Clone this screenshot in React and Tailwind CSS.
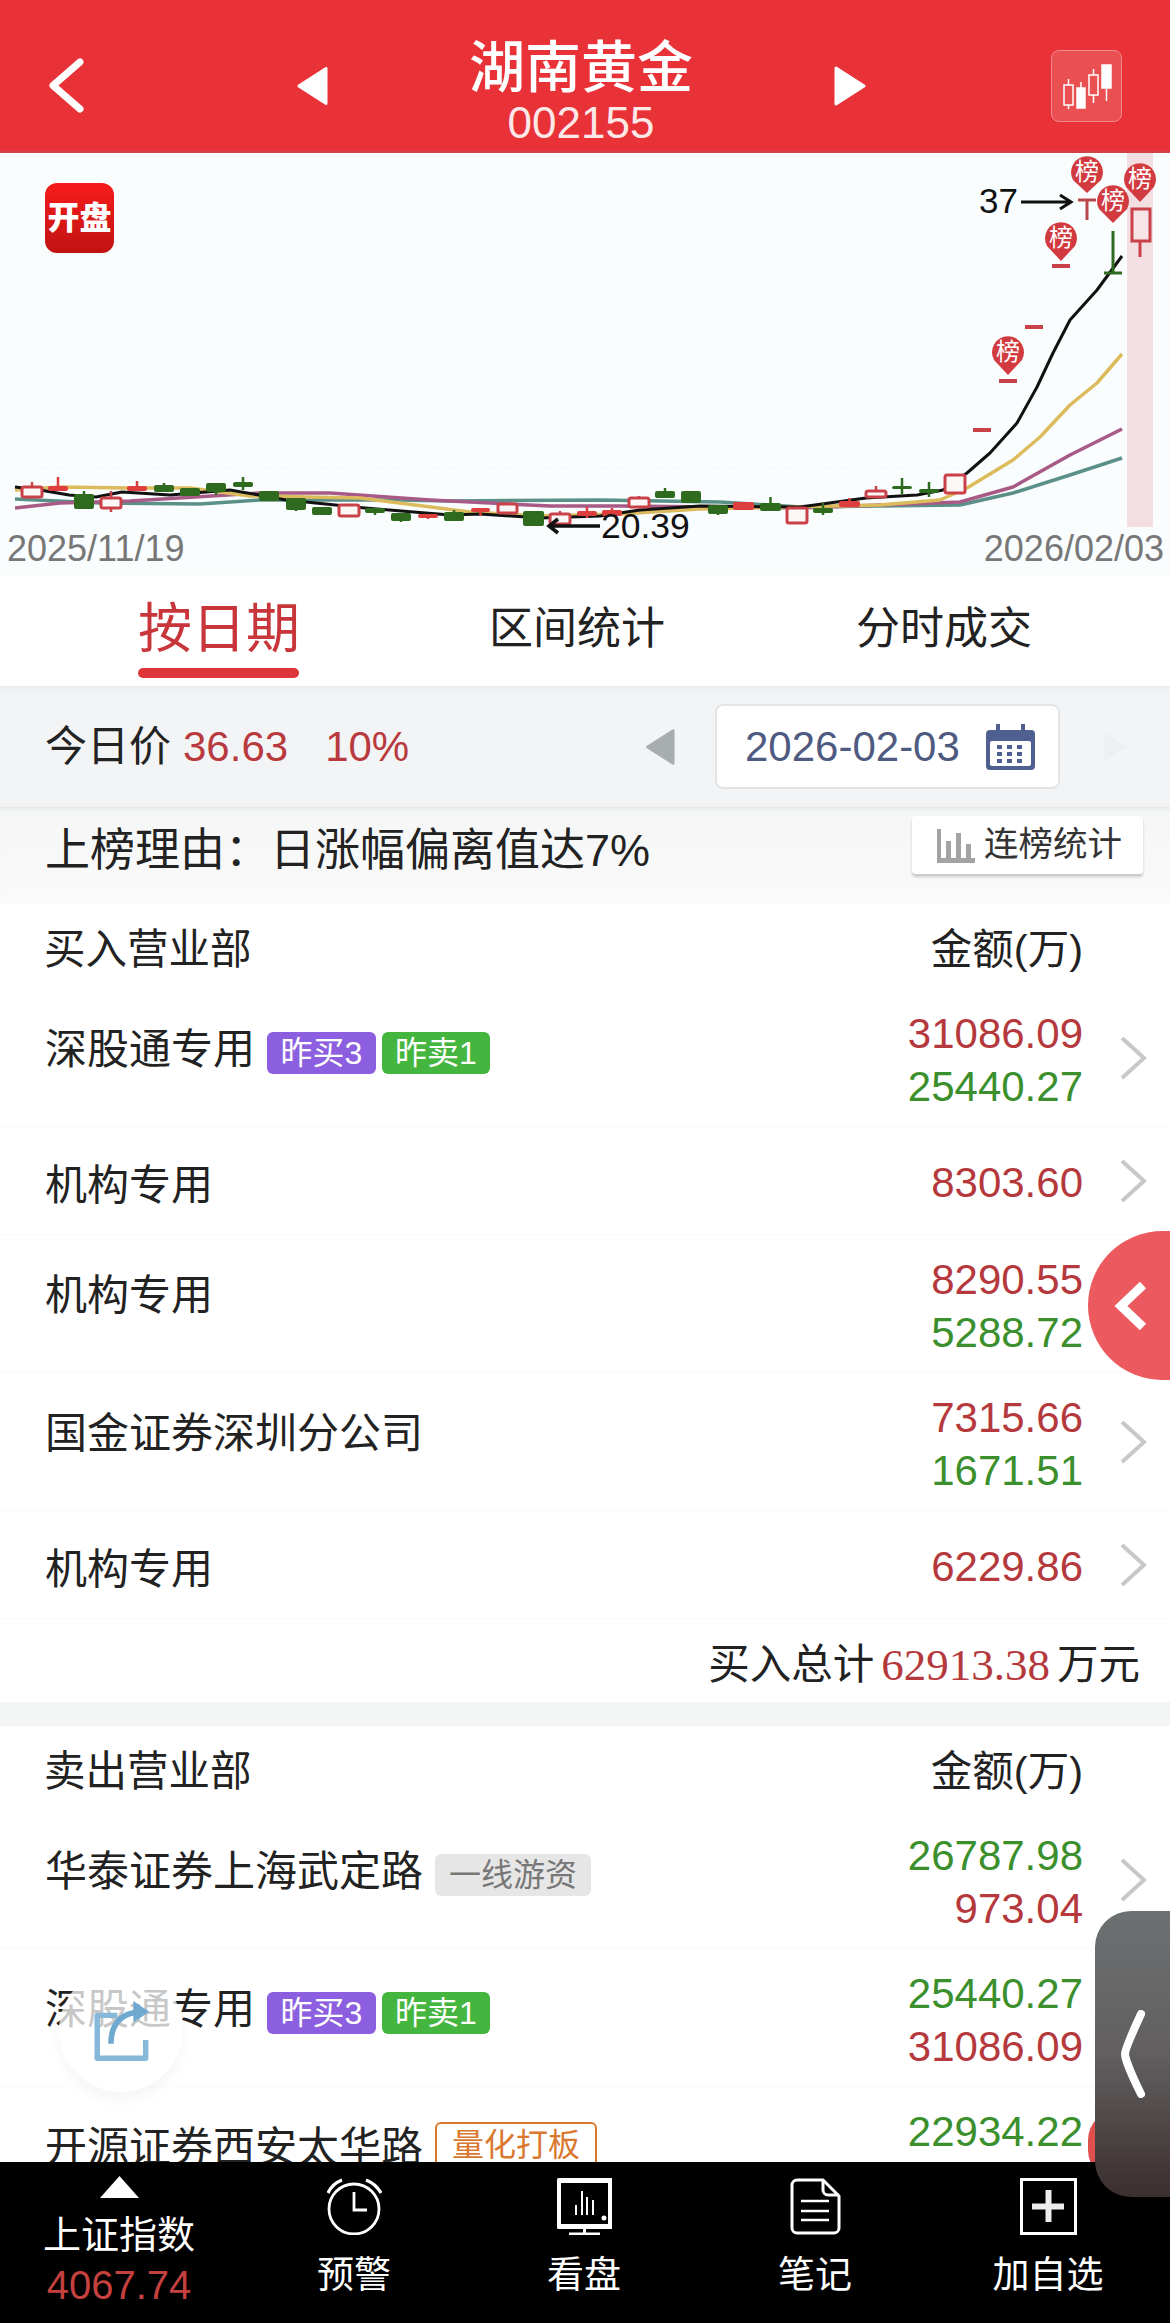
const candles = [
	// x, y, w, h, kind, wick top, wick bottom
	[22, 487, 20, 10, 'hollow', 482, 497],
	[48, 486, 20, 5, 'red', 477, 491],
	[74, 494, 20, 15, 'green', 491, 509],
	[101, 498, 20, 10, 'hollow', 491, 512],
	[127, 486, 20, 5, 'red', 481, 491],
	[154, 485, 20, 7, 'green', 483, 492],
	[180, 488, 20, 8, 'green', 488, 496],
	[206, 483, 20, 9, 'green', 483, 495],
	[233, 482, 20, 5, 'green', 477, 490],
	[259, 491, 20, 10, 'green', 491, 501],
	[286, 498, 20, 12, 'green', 498, 511],
	[312, 507, 20, 8, 'green', 507, 515],
	[339, 505, 20, 11, 'hollow', 505, 516],
	[365, 508, 20, 5, 'green', 508, 515],
	[391, 513, 20, 8, 'green', 513, 522],
	[418, 514, 20, 4, 'red', 514, 519],
	[444, 512, 20, 9, 'green', 510, 521],
	[471, 508, 19, 4, 'red', 508, 516],
	[498, 504, 19, 9, 'hollow', 504, 513],
	[523, 511, 21, 15, 'green', 511, 526],
	[550, 514, 20, 10, 'hollow', 511, 524],
	[577, 511, 20, 5, 'red', 507, 518],
	[602, 510, 20, 6, 'red', 508, 516],
	[629, 498, 20, 9, 'hollow', 496, 507],
	[655, 491, 20, 7, 'green', 488, 498],
	[681, 491, 20, 12, 'green', 491, 503],
	[708, 505, 20, 9, 'green', 505, 515],
	[733, 502, 21, 8, 'red', 502, 510],
	[760, 503, 21, 8, 'green', 497, 511],
	[787, 508, 20, 15, 'hollow', 508, 524],
	[813, 508, 20, 5, 'green', 503, 515],
	[839, 501, 21, 6, 'red', 498, 507],
	[866, 491, 20, 6, 'hollow', 486, 497],
	[892, 486, 20, 3, 'green', 478, 494],
	[919, 489, 20, 4, 'green', 482, 497],
	[945, 475, 20, 18, 'hollow', 475, 493],
]

const dashes = [
	[973, 430],
	[999, 381],
	[1025, 327],
	[1052, 266],
]

const pins = [
	[1087, 172, 193],
	[1113, 201, 223],
	[1140, 179, 202],
	[1061, 238, 261],
	[1008, 352, 375],
]

const blackLine = '15,487 40,490 69,495 96,497 122,492 170,495 230,490 259,495 286,500 365,508 450,515 480,514 540,518 600,516 640,510 700,506 800,507 866,498 917,495 943,490 967,473 990,453 1017,423 1037,387 1053,353 1070,320 1097,290 1122,256'
const yellowLine = '15,490 60,487 130,488 190,488 250,496 360,498 470,512 540,516 620,514 700,509 880,505 940,500 967,488 1013,460 1040,437 1070,405 1097,383 1122,354'
const purpleLine = '15,508 60,503 130,501 260,493 330,493 430,500 550,506 620,506 800,508 960,502 1013,487 1070,455 1122,429'
const tealLine = '15,499 100,503 200,504 260,500 400,500 450,501 600,500 720,502 800,507 960,505 1013,493 1070,475 1122,458'

const KLine = () => (
	<svg className="absolute inset-0 h-full w-full" viewBox="0 153 1170 422">
		<rect x="1127" y="153" width="26" height="374" fill="#f3dfe2" />
		{[258, 363, 468].map((y) => (
			<line key={y} x1="15" x2="1122" y1={y} y2={y} stroke="#f2f5f5" strokeDasharray="5 9" />
		))}
		<polyline points={tealLine} fill="none" stroke="#5b9088" strokeWidth="3.5" strokeLinejoin="round" />
		<polyline points={purpleLine} fill="none" stroke="#a85a86" strokeWidth="3.5" strokeLinejoin="round" />
		<polyline points={yellowLine} fill="none" stroke="#dcbb5c" strokeWidth="3.5" strokeLinejoin="round" />
		<polyline points={blackLine} fill="none" stroke="#111111" strokeWidth="3" strokeLinejoin="round" />
		{candles.map(([x, y, w, h, kind, top, bottom]) => {
			const color = kind === 'green' ? '#2f6b1e' : kind === 'red' ? '#dc3f3d' : '#c9424a'
			return (
				<g key={x}>
					<line x1={x + w / 2} x2={x + w / 2} y1={top} y2={bottom} stroke={color} strokeWidth="2.5" />
					<rect
						x={x}
						y={y}
						width={w}
						height={h}
						rx="2"
						fill={kind === 'hollow' ? '#fbf7f7' : color}
						stroke={kind === 'hollow' ? color : 'none'}
						strokeWidth={kind === 'hollow' ? 3 : 0}
					/>
				</g>
			)
		})}
		{dashes.map(([x, y]) => (
			<rect key={x} x={x} y={y - 2} width="18" height="4" fill="#c9424a" />
		))}
		<path d="M1078 200H1096M1087 200V220" stroke="#b9474c" strokeWidth="3" fill="none" />
		<path d="M1104 273H1122M1113 231V273" stroke="#2f6b1e" strokeWidth="3" fill="none" />
		<path d="M1140 241V257" stroke="#c9424a" strokeWidth="3" fill="none" />
		<rect x="1132" y="209" width="18" height="32" fill="#f6e4e6" stroke="#c9424a" strokeWidth="3" />
		{pins.map(([cx, cy, tip]) => (
			<g key={cx}>
				<path
					d={`M${cx} ${tip} L${cx - 14} ${cy + 8} A16 16 0 1 1 ${cx + 14} ${cy + 8} Z`}
					fill="#d13b40"
				/>
				<text
					x={cx}
					y={cy + 8}
					textAnchor="middle"
					fontSize="24"
					fill="#ffffff"
					fontFamily="Noto Sans CJK SC, sans-serif"
				>
					榜
				</text>
			</g>
		))}
		<text x="979" y="213" fontSize="35" fill="#111111" fontFamily="Liberation Sans, sans-serif">37</text>
		<path d="M1021 202H1068M1060 195L1071 202L1060 209" stroke="#111111" strokeWidth="3" fill="none" />
		<path d="M600 526H550M558 519L549 526L558 533" stroke="#111111" strokeWidth="3.5" fill="none" />
		<text x="601" y="538" fontSize="35.5" fill="#111111" fontFamily="Liberation Sans, sans-serif">20.39</text>
	</svg>
)

const CandleIcon = () => (
	<svg width="71" height="72" viewBox="0 0 71 72" fill="none" stroke="#ffffff" strokeWidth="1.5">
		<rect x="12" y="34" width="9" height="20" />
		<path d="M16.5 28V34M16.5 54V58" />
		<rect x="25" y="37" width="8" height="20" fill="#ffffff" />
		<path d="M29 31V37" />
		<rect x="37" y="24" width="9" height="20" />
		<path d="M41.5 18V24M41.5 44V52" />
		<rect x="50" y="14" width="9" height="23" fill="#ffffff" />
		<path d="M54.5 37V50" />
	</svg>
)

const Triangle = ({ dir, className }) => (
	<svg className={className} viewBox="0 0 34 40">
		<path
			d={dir === 'left' ? 'M32 2 L4 20 L32 38 Z' : 'M2 2 L30 20 L2 38 Z'}
			fill="currentColor"
			stroke="currentColor"
			strokeWidth="3"
			strokeLinejoin="round"
		/>
	</svg>
)

const Header = () => (
	<div className="flex h-[153px] items-center border-b-2 border-[#cf4448] bg-[#e83238] pl-[48px] pt-[20px] text-white">
		<svg width="36" height="55" viewBox="0 0 36 55" fill="none">
			<path d="M32 4 L5 27.5 L32 51" stroke="#ffffff" strokeWidth="7" strokeLinecap="round" strokeLinejoin="round" />
		</svg>
		<Triangle dir="left" className="ml-[211px] h-[40px] w-[33px] text-white" />
		<div className="mt-[12px] flex w-[506px] flex-col items-center">
			<div className="text-[56px] leading-[62px] font-medium">湖南黄金</div>
			<div className="text-[44px] leading-[48px] text-[#fde8e8]">002155</div>
		</div>
		<Triangle dir="right" className="h-[40px] w-[34px] text-white" />
		<div className="ml-[183px] h-[72px] w-[71px] rounded-[8px] border border-[#f08a8c] bg-[#ea4f52]">
			<CandleIcon />
		</div>
	</div>
)

const Chart = () => (
	<div className="relative h-[422px] bg-[#fafdfe]">
		<KLine />
		<div className="absolute left-[45px] top-[30px] flex h-[70px] w-[69px] items-center justify-center rounded-[12px] bg-gradient-to-b from-[#f81c1c] to-[#c01212] text-[32px] leading-none font-black text-white">
			开盘
		</div>
		<div className="absolute left-[7px] top-[376px] text-[36px] leading-[40px] text-[#777777]">2025/11/19</div>
		<div className="absolute right-[6px] top-[376px] text-[36px] leading-[40px] text-[#777777]">2026/02/03</div>
	</div>
)

const Tabs = () => (
	<div className="flex h-[111px] items-start bg-white pl-[138px] text-[#222222]">
		<div className="flex flex-col pt-[23px]">
			<div className="text-[54px] leading-[62px] text-[#c8353a]">按日期</div>
			<div className="mt-[8px] h-[10px] w-[161px] rounded-full bg-[#dd353a]" />
		</div>
		<div className="ml-[189px] pt-[23px] text-[44px] leading-[62px]">区间统计</div>
		<div className="ml-[191px] pt-[23px] text-[44px] leading-[62px]">分时成交</div>
	</div>
)

const CalendarIcon = () => (
	<svg width="49" height="46" viewBox="0 0 49 46">
		<rect x="0" y="6" width="49" height="40" rx="4" fill="#4f5f8f" />
		<rect x="4" y="17" width="41" height="25" rx="2" fill="#ffffff" />
		<path d="M12 0V11M37 0V11" stroke="#4f5f8f" strokeWidth="4" />
		{[11, 21, 31].map((x) =>
			[21, 28, 35].map((y) => <rect key={`${x}-${y}`} x={x} y={y} width="5" height="4" fill="#4f5f8f" />),
		)}
	</svg>
)

const DateBar = () => (
	<div className="flex h-[121px] items-center bg-[#f3f4f5] pl-[45px] pr-[43px] text-[42px] shadow-[inset_0_8px_8px_-8px_#e4e4e4]">
		<div className="flex flex-1 items-center text-[#222222]">
			<span>今日价</span>
			<span className="ml-[12px] text-[#b93a3e]">36.63</span>
			<span className="ml-[37px] text-[#b93a3e]">10%</span>
		</div>
		<Triangle dir="left" className="h-[40px] w-[31px] text-[#a8aeae]" />
		<div className="ml-[40px] flex h-[85px] w-[345px] items-center rounded-[8px] border-2 border-[#e2e4e6] bg-white pl-[28px]">
			<span className="text-[42px] text-[#4f5a80]">2026-02-03</span>
			<div className="ml-[26px]">
				<CalendarIcon />
			</div>
		</div>
		<Triangle dir="right" className="ml-[44px] h-[40px] w-[23px] text-[#eeeff0]" />
	</div>
)

const BarsIcon = () => (
	<svg width="38" height="36" viewBox="0 0 38 36" fill="#a3a3a3">
		<rect x="0" y="2" width="4" height="34" />
		<rect x="0" y="31" width="38" height="5" />
		<rect x="9" y="14" width="5" height="17" />
		<rect x="19" y="6" width="5" height="25" />
		<rect x="29" y="17" width="5" height="14" />
	</svg>
)

const ReasonBar = () => (
	<div className="flex h-[97px] justify-between bg-gradient-to-b from-[#f5f6f6] to-[#fafafa] pl-[45px] pr-[27px] pt-[9px] shadow-[inset_0_4px_4px_-3px_#dddddd]">
		<div className="pt-[4px] text-[45px] leading-[62px] text-[#222222]">上榜理由：日涨幅偏离值达7%</div>
		<div className="flex h-[58px] w-[231px] items-center gap-[9px] rounded-[4px] bg-white pl-[25px] text-[34.5px] text-[#333333] shadow-[0_3px_3px_#c8c8c8]">
			<BarsIcon />
			<span>连榜统计</span>
		</div>
	</div>
)

const tagStyles = {
	buy: 'mt-[6px] h-[42px] bg-[#8c5fe0] text-white w-[109px]',
	sell: 'mt-[6px] h-[42px] bg-[#44b53f] text-white w-[108px]',
	gray: 'mt-[6px] h-[42px] bg-[#e6e6e6] text-[#777777] w-[156px]',
	orange: '-mt-[6px] h-[46px] border-2 border-[#d9782f] text-[#d9782f] w-[162px]',
}

const Tag = ({ kind, children }) => (
	<span className={`flex items-center justify-center rounded-[6px] text-[32px] leading-none ${tagStyles[kind]}`}>
		{children}
	</span>
)

const Chevron = () => (
	<svg className="ml-[35px] shrink-0 self-center" width="30" height="46" viewBox="0 0 30 46" fill="none">
		<path d="M4 3 L26 23 L4 43" stroke="#c8c8c8" strokeWidth="4" />
	</svg>
)

const SectionHead = ({ title }) => (
	<div className="flex h-[85px] items-center justify-between pl-[44px] pr-[87px] pt-[8px] text-[41.5px] text-[#222222]">
		<span>{title}</span>
		<span>金额(万)</span>
	</div>
)

const valueColor = { r: 'text-[#b5393c]', g: 'text-[#3b8f2c]' }

const Row = ({ name, tags = [], values }) => {
	const single = values.length === 1 && !values[0].keepTall
	return (
		<div
			className={`flex items-start border-b border-[#fafafa] pl-[45px] pr-[22px] ${
				single ? 'h-[108px]' : 'h-[138px]'
			}`}
		>
			<div className={`flex flex-1 items-center gap-[6px] ${single ? 'pt-[34px]' : 'pt-[36px]'}`}>
				<span className="mr-[6px] text-[42px] leading-[50px] text-[#222222]">{name}</span>
				{tags.map((t) => (
					<Tag key={t.label} kind={t.kind}>
						{t.label}
					</Tag>
				))}
			</div>
			<div className={`flex flex-col items-end text-[42px] leading-[53px] ${single ? 'pt-[29px]' : 'pt-[18px]'}`}>
				{values.map((v) => (
					<span key={v.text} className={valueColor[v.color]}>
						{v.text}
					</span>
				))}
			</div>
			<Chevron />
		</div>
	)
}

const yesterdayTags = [
	{ kind: 'buy', label: '昨买3' },
	{ kind: 'sell', label: '昨卖1' },
]

const BuyList = () => (
	<div className="bg-white">
		<SectionHead title="买入营业部" />
		<Row
			name="深股通专用"
			tags={yesterdayTags}
			values={[
				{ text: '31086.09', color: 'r' },
				{ text: '25440.27', color: 'g' },
			]}
		/>
		<Row name="机构专用" values={[{ text: '8303.60', color: 'r' }]} />
		<Row
			name="机构专用"
			values={[
				{ text: '8290.55', color: 'r' },
				{ text: '5288.72', color: 'g' },
			]}
		/>
		<Row
			name="国金证券深圳分公司"
			values={[
				{ text: '7315.66', color: 'r' },
				{ text: '1671.51', color: 'g' },
			]}
		/>
		<Row name="机构专用" values={[{ text: '6229.86', color: 'r' }]} />
		<div className="flex h-[83px] items-start justify-end pr-[30px] pt-[21px] text-[41.5px] leading-[50px] text-[#222222]">
			<span>买入总计</span>
			<span className="ml-[7px] font-['Liberation_Serif',serif] text-[45px] text-[#b5393c]">62913.38</span>
			<span className="ml-[7px]">万元</span>
		</div>
	</div>
)

const SellList = () => (
	<div className="bg-white">
		<SectionHead title="卖出营业部" />
		<Row
			name="华泰证券上海武定路"
			tags={[{ kind: 'gray', label: '一线游资' }]}
			values={[
				{ text: '26787.98', color: 'g' },
				{ text: '973.04', color: 'r' },
			]}
		/>
		<Row
			name="深股通专用"
			tags={yesterdayTags}
			values={[
				{ text: '25440.27', color: 'g' },
				{ text: '31086.09', color: 'r' },
			]}
		/>
		<Row
			name="开源证券西安太华路"
			tags={[{ kind: 'orange', label: '量化打板' }]}
			values={[{ text: '22934.22', color: 'g', keepTall: true }]}
		/>
	</div>
)

const AlarmIcon = () => (
	<svg width="55" height="57" viewBox="0 0 55 57" fill="none" stroke="#ffffff" strokeWidth="2.8">
		<circle cx="27" cy="31" r="25" />
		<path d="M27 14V32H40" />
		<path d="M1 15Q5 6 15 2M39 2Q49 6 54 15" strokeWidth="3.2" />
	</svg>
)

const MonitorIcon = () => (
	<svg width="55" height="57" viewBox="0 0 55 57">
		<rect x="0" y="0" width="56" height="51" rx="1.5" fill="#ffffff" />
		<rect x="4" y="5" width="47" height="41" fill="#000000" />
		<rect x="26" y="51" width="3" height="5" fill="#ffffff" />
		<rect x="12" y="54.5" width="31" height="2.5" fill="#ffffff" />
		<path d="M19 27V37M25 13V37M30 19V37M36 22V37" stroke="#ffffff" strokeWidth="2" />
		<circle cx="47" cy="40" r="2.5" fill="#ffffff" />
	</svg>
)

const NoteIcon = () => (
	<svg width="51" height="57" viewBox="0 0 51 57" fill="none" stroke="#ffffff" strokeWidth="3">
		<path d="M7 2H33L49 18V50A5 5 0 0 1 44 55H7A5 5 0 0 1 2 50V7A5 5 0 0 1 7 2Z" />
		<path d="M33 2V12A5 5 0 0 0 38 17H49" />
		<path d="M11 23H39M11 33H39M11 42H39" strokeWidth="2.5" />
	</svg>
)

const PlusBoxIcon = () => (
	<svg width="57" height="57" viewBox="0 0 57 57" fill="none" stroke="#ffffff">
		<rect x="1.5" y="1.5" width="54" height="54" strokeWidth="3" />
		<path d="M12 28.5H44M28.5 12V44" strokeWidth="6" stroke="#eeeeee" />
	</svg>
)

const FooterItem = ({ width, icon, label }) => (
	<div className={`flex flex-col items-center pt-[16px] ${width}`}>
		<div className="h-[57px]">{icon}</div>
		<div className="mt-[19px] text-[37px] leading-[44px] text-white">{label}</div>
	</div>
)

const Footer = () => (
	<div className="relative z-10 flex h-[161px] shrink-0 bg-black">
		<div className="flex w-[238px] flex-col items-center pt-[14px]">
			<svg width="39" height="22" viewBox="0 0 39 22">
				<path d="M19.5 0L39 22H0Z" fill="#ffffff" />
			</svg>
			<div className="mt-[14px] text-[38px] leading-[46px] text-white">上证指数</div>
			<div className="mt-[3px] text-[40px] leading-[48px] text-[#c5413f]">4067.74</div>
		</div>
		<FooterItem width="w-[232px]" icon={<AlarmIcon />} label="预警" />
		<FooterItem width="w-[228px]" icon={<MonitorIcon />} label="看盘" />
		<FooterItem width="w-[234px]" icon={<NoteIcon />} label="笔记" />
		<FooterItem width="w-[232px]" icon={<PlusBoxIcon />} label="加自选" />
	</div>
)

const ShareButton = () => (
	<div className="absolute left-[59px] top-[1968px] flex h-[124px] w-[124px] items-center justify-center rounded-full bg-white/75 shadow-[0_8px_14px_rgba(0,0,0,0.04)]">
		<svg width="60" height="64" viewBox="0 0 64 70" fill="none" stroke="#86b8da">
			<path d="M28 19H6V66H59V46" strokeWidth="6" strokeLinejoin="round" />
			<path d="M21 50C21 28 32 17 52 15" strokeWidth="6" stroke="#6fa9d0" />
			<path d="M46 4L62 15L46 26Z" fill="#6fa9d0" stroke="#6fa9d0" strokeWidth="1" />
		</svg>
	</div>
)

const RedTab = () => (
	<div className="absolute left-[1088px] top-[1231px] flex h-[149px] w-[82px] items-center rounded-l-full bg-[#ec5a5f] pl-[26px]">
		<svg width="34" height="50" viewBox="0 0 34 50" fill="none">
			<path d="M29 4L7 25L29 46" stroke="#ffffff" strokeWidth="9" />
		</svg>
	</div>
)

const GrayHandle = () => (
	<div className="absolute left-[1095px] top-[1911px] z-20 flex h-[286px] w-[75px] items-center rounded-l-[36px] bg-gradient-to-b from-[#6c7071] via-[#625f60] to-[#3b2f2f] pl-[23px]">
		<svg width="28" height="88" viewBox="0 0 28 88" fill="none">
			<path d="M23 4C11 30 7 41 7 44C7 48 13 64 23 84" stroke="#ffffff" strokeWidth="8" strokeLinecap="round" />
		</svg>
	</div>
)

export default function App() {
	return (
		<div className="relative flex h-[2323px] w-[1170px] flex-col overflow-hidden bg-white font-['Liberation_Sans','Noto_Sans_CJK_SC',sans-serif]">
			<div className="min-h-0 flex-1 overflow-hidden">
				<Header />
				<Chart />
				<Tabs />
				<DateBar />
				<ReasonBar />
				<BuyList />
				<div className="h-[24px] bg-[#f4f5f5]" />
				<SellList />
			</div>
			<RedTab />
			<ShareButton />
			<div className="absolute left-[1088px] top-[2110px] h-[70px] w-[30px] rounded-l-full bg-[#df4f4e]" />
			<Footer />
			<GrayHandle />
		</div>
	)
}
